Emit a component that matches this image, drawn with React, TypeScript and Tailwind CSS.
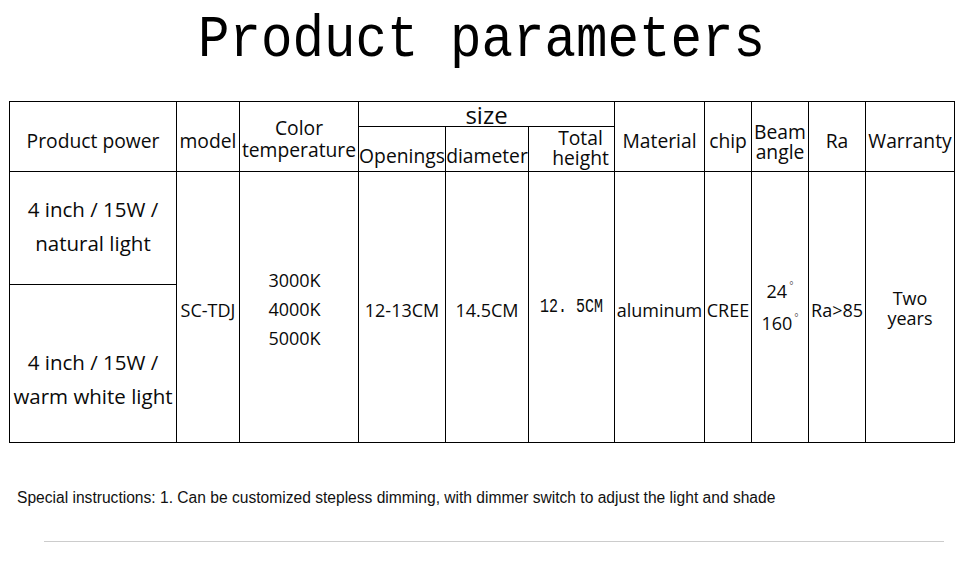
import React from 'react';

const cellFont = { fontFamily: '"Open Sans", "Noto Sans", sans-serif' };

const Deg = () => <span className="relative -top-[8px] ml-[2px] text-[10px] font-light">°</span>;

const head = 'border border-black font-normal p-0 text-[19.3px]';
const cell = 'border border-black p-0 align-middle';

export default function App() {
  return (
    <div className="w-[963px] h-[569px] bg-white text-black overflow-hidden">
      <div className="h-[101px] flex justify-center pt-[7px]">
        <h1
          className="text-[52.5px] leading-[70px] font-normal scale-y-[1.13]"
          style={{ fontFamily: '"Liberation Mono", monospace' }}
        >
          Product parameters
        </h1>
      </div>

      <table
        className="ml-[9px] w-[945px] table-fixed border-collapse text-[18px] text-[#0a0a0a] text-center"
        style={cellFont}
      >
        <colgroup>
          <col className="w-[167px]" />
          <col className="w-[63px]" />
          <col className="w-[119px]" />
          <col className="w-[87px]" />
          <col className="w-[83px]" />
          <col className="w-[86px]" />
          <col className="w-[90px]" />
          <col className="w-[47px]" />
          <col className="w-[57px]" />
          <col className="w-[57px]" />
          <col className="w-[89px]" />
        </colgroup>
        <thead>
          <tr className="h-[25px]">
            <th rowSpan={2} className={`${head} align-middle pt-[9px] leading-[22px]`}>
              Product power
            </th>
            <th rowSpan={2} className={`${head} align-middle pt-[9px] leading-[22px]`}>
              model
            </th>
            <th rowSpan={2} className={`${head} align-middle pt-[5px] leading-[22px]`}>
              Color
              <br />
              temperature
            </th>
            <th colSpan={3} className="border border-black font-normal p-0 text-[24px] leading-[23px] align-middle">
              size
            </th>
            <th rowSpan={2} className={`${head} align-middle pt-[9px] leading-[22px]`}>
              Material
            </th>
            <th rowSpan={2} className={`${head} align-middle pt-[9px] leading-[22px]`}>
              chip
            </th>
            <th rowSpan={2} className={`${head} align-middle pt-[11px] leading-[20px]`}>
              Beam
              <br />
              angle
            </th>
            <th rowSpan={2} className={`${head} align-middle pt-[9px] leading-[22px]`}>
              Ra
            </th>
            <th rowSpan={2} className={`${head} align-middle pt-[9px] leading-[22px]`}>
              Warranty
            </th>
          </tr>
          <tr className="h-[45px]">
            <th className={`${head} align-bottom pb-[4px] leading-[22px]`}>Openings</th>
            <th className={`${head} align-bottom pb-[4px] leading-[22px]`}>diameter</th>
            <th className={`${head} align-bottom pb-[3px] pl-[18px] leading-[20px]`}>
              Total
              <br />
              height
            </th>
          </tr>
        </thead>
        <tbody>
          <tr className="h-[113px]">
            <td className={`${cell} pb-[4px] leading-[34px] text-[20.5px]`}>
              4 inch / 15W /
              <br />
              natural light
            </td>
            <td rowSpan={2} className={`${cell} pt-[5px] leading-[22px]`}>
              SC-TDJ
            </td>
            <td rowSpan={2} className={`${cell} pt-[5px] pr-[9px] leading-[29px]`}>
              3000K
              <br />
              4000K
              <br />
              5000K
            </td>
            <td rowSpan={2} className={`${cell} pt-[5px] leading-[22px]`}>
              12-13CM
            </td>
            <td rowSpan={2} className={`${cell} pt-[5px] leading-[22px]`}>
              14.5CM
            </td>
            <td
              rowSpan={2}
              className={`${cell} pt-[1px] leading-[22px] text-[15px]`}
              style={{ fontFamily: '"Liberation Mono", monospace' }}
            >
              <span className="inline-block scale-y-[1.3]">12. 5CM</span>
            </td>
            <td rowSpan={2} className={`${cell} pt-[5px] leading-[22px]`}>
              aluminum
            </td>
            <td rowSpan={2} className={`${cell} pt-[5px] leading-[22px]`}>
              CREE
            </td>
            <td rowSpan={2} className={`${cell} pt-[4px] leading-[29px]`}>
              24<Deg />
              <br />
              160<Deg />
            </td>
            <td rowSpan={2} className={`${cell} pt-[5px] leading-[22px]`}>
              Ra&gt;85
            </td>
            <td rowSpan={2} className={`${cell} pt-[1px] leading-[20px]`}>
              Two
              <br />
              years
            </td>
          </tr>
          <tr className="h-[158px]">
            <td className={`${cell} pt-[30px] leading-[34px] text-[20.5px]`}>
              4 inch / 15W /
              <br />
              warm white light
            </td>
          </tr>
        </tbody>
      </table>

      <p
        className="mt-[46px] ml-[17px] text-[15.6px] leading-[18px] text-[#111]"
        style={{ fontFamily: '"Liberation Sans", Arial, sans-serif' }}
      >
        Special instructions: 1. Can be customized stepless dimming, with dimmer switch to adjust the light and shade
      </p>

      <div className="mt-[34px] ml-[44px] w-[900px] border-t border-[#cccccc]" />
    </div>
  );
}
